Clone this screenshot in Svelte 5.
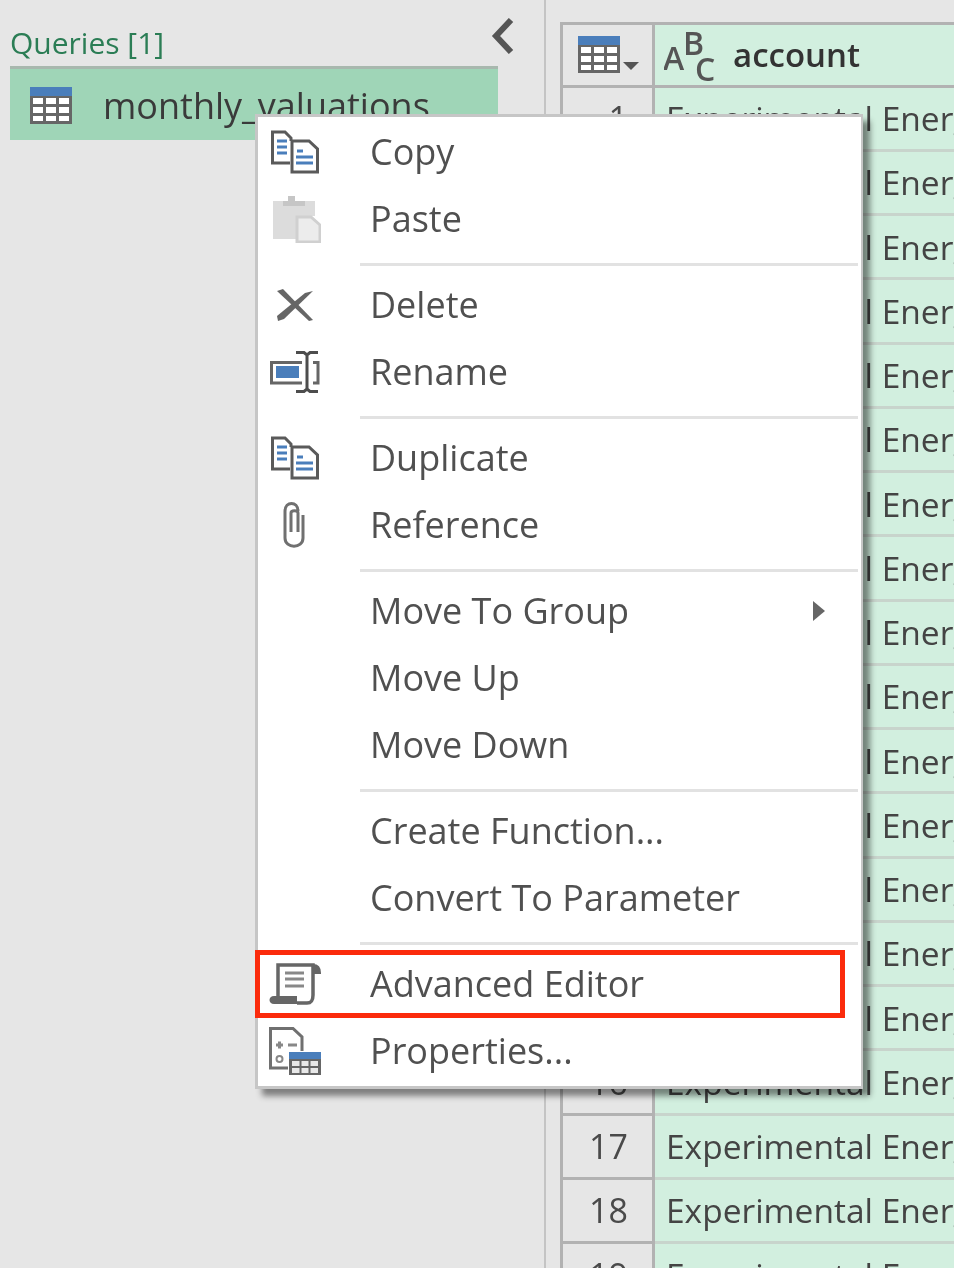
<script>
	const rows = Array.from({ length: 19 }, (_, i) => i + 1);

	// kind: null = no icon, sep = separator line
	const menu = [
		{ label: 'Copy', icon: 'copy' },
		{ label: 'Paste', icon: 'paste' },
		{ sep: true },
		{ label: 'Delete', icon: 'delete' },
		{ label: 'Rename', icon: 'rename' },
		{ sep: true },
		{ label: 'Duplicate', icon: 'copy' },
		{ label: 'Reference', icon: 'clip' },
		{ sep: true },
		{ label: 'Move To Group', arrow: true },
		{ label: 'Move Up' },
		{ label: 'Move Down' },
		{ sep: true },
		{ label: 'Create Function...' },
		{ label: 'Convert To Parameter' },
		{ sep: true },
		{ label: 'Advanced Editor', icon: 'editor' },
		{ label: 'Properties...', icon: 'props' }
	];
</script>

<div class="page">
	<aside class="queries">
		<div class="queries-head">
			<span class="queries-title">Queries [1]</span>
			<svg class="collapse" width="24" height="36" viewBox="0 0 24 36">
				<path d="M20 2 L5 18 L20 34" fill="none" stroke="#555" stroke-width="6" />
			</svg>
		</div>
		<div class="query-row">
			<svg width="42" height="37" viewBox="0 0 42 37">
				<rect x="0" y="0" width="42" height="37" fill="#666" />
				<rect x="0" y="0" width="42" height="9" fill="#4a7ebb" />
				<g fill="#fff">
					<rect x="3" y="11" width="10" height="6" /><rect x="16" y="11" width="10" height="6" /><rect x="29" y="11" width="10" height="6" />
					<rect x="3" y="20" width="10" height="6" /><rect x="16" y="20" width="10" height="6" /><rect x="29" y="20" width="10" height="6" />
					<rect x="3" y="29" width="10" height="5" /><rect x="16" y="29" width="10" height="5" /><rect x="29" y="29" width="10" height="5" />
				</g>
			</svg>
			<span>monthly_valuations</span>
		</div>
	</aside>

	<main class="grid-pane">
		<div class="table">
			<div class="row head">
				<div class="num">
					<svg width="62" height="38" viewBox="0 0 62 38">
						<rect x="0" y="0" width="42" height="37" fill="#666" />
						<rect x="0" y="0" width="42" height="9" fill="#4a7ebb" />
						<g fill="#fff">
							<rect x="3" y="11" width="10" height="6" /><rect x="16" y="11" width="10" height="6" /><rect x="29" y="11" width="10" height="6" />
							<rect x="3" y="20" width="10" height="6" /><rect x="16" y="20" width="10" height="6" /><rect x="29" y="20" width="10" height="6" />
							<rect x="3" y="29" width="10" height="5" /><rect x="16" y="29" width="10" height="5" /><rect x="29" y="29" width="10" height="5" />
						</g>
						<path d="M45 26 H61 L53 34 Z" fill="#555" />
					</svg>
				</div>
				<div class="cell head-cell">
					<svg class="abc" width="56" height="52" viewBox="0 0 56 52">
						<text x="-1" y="41" class="abc-letter">A</text>
						<text x="19" y="26" class="abc-letter">B</text>
						<text x="31" y="52" class="abc-letter">C</text>
					</svg>
					<span class="col-name">account</span>
				</div>
			</div>
			{#each rows as n}
				<div class="row">
					<div class="num">{n}</div>
					<div class="cell">Experimental Energy</div>
				</div>
			{/each}
		</div>
	</main>

	<div class="menu">
		{#each menu as item}
			{#if item.sep}
				<div class="sep"></div>
			{:else}
				<div class="item">
					<div class="icon">
						{#if item.icon === 'copy'}
							<svg width="48" height="44" viewBox="0 0 48 44" fill="none">
								<path d="M19 33 H1.5 V2 H14 L20 8 V11" fill="#fff" stroke="#5a5a5a" stroke-width="3" />
								<path d="M21 11 H38 L46.5 19 V42 H21 Z" fill="#fff" stroke="#5a5a5a" stroke-width="3" />
								<path d="M6 11 H16 M6 17 H16 M6 23 H16 M26 21 H32 M25 27 H42 M25 33 H42" stroke="#4a7ebb" stroke-width="3" />
							</svg>
						{:else if item.icon === 'paste'}
							<svg width="52" height="48" viewBox="-4 0 52 48">
								<path d="M0 6 H42 V21 H23 V44 H0 Z" fill="#dcdcdc" />
								<path d="M10 11 V6 H15 V1 H22 V6 H32 V11 Z" fill="#c6c6c6" />
								<path d="M24 22 H38 L47 30 V47 H24 Z" fill="#ececec" stroke="#d0d0d0" stroke-width="3" />
							</svg>
						{:else if item.icon === 'delete'}
							<svg width="38" height="32" viewBox="0 0 38 32">
								<path d="M1 2 L7 0 L37 31 L33 32 Z" fill="#666" />
								<path d="M37 2 L29 4 L1 27 L2 32 L8 30 Z" fill="#666" />
							</svg>
						{:else if item.icon === 'rename'}
							<svg width="50" height="42" viewBox="0 0 50 42" fill="none">
								<path d="M32 11.5 H1.5 V32 H32" stroke="#666" stroke-width="3" />
								<rect x="6" y="15" width="23" height="12" fill="#4a7ebb" />
								<path d="M43 11.5 H48 V32 H43" stroke="#666" stroke-width="3" />
								<path d="M26 1.5 H34 L37 4 L40 1.5 H48 M26 40.5 H34 L37 38 L40 40.5 H48 M37 4 V38" stroke="#4d4d4d" stroke-width="3" />
							</svg>
						{:else if item.icon === 'clip'}
							<svg width="24" height="46" viewBox="0 0 24 46" fill="none">
								<path d="M8 30 V11 C8 8 15 8 15 11 V30 M20 13 V36 C20 47 2 47 2 36 V9 C2 -1 15 -1 15 9" stroke="#707070" stroke-width="3" />
							</svg>
						{:else if item.icon === 'editor'}
							<svg width="52" height="42" viewBox="0 0 52 42" fill="none">
								<path d="M9 34 V2 H44 V32 C44 38 42 40 38 40 H28" stroke="#666" stroke-width="3.5" />
								<path d="M44 2 C49 2 51 5 51 10 H44" fill="#666" stroke="#666" stroke-width="2" />
								<path d="M5 33 H28 V41 H5 C-1 41 -1 33 5 33 Z" fill="#666" />
								<path d="M16 10 H35 M16 16 H35 M16 23 H35" stroke="#888" stroke-width="3" />
							</svg>
						{:else if item.icon === 'props'}
							<svg width="52" height="48" viewBox="0 0 52 48" fill="none">
								<path d="M19 41 H1.5 V1.5 H24 L33 10 V24" stroke="#707070" stroke-width="3" />
								<path d="M7 18 H14 M10.5 14.5 V21.5 M19 18 H28" stroke="#888" stroke-width="3" />
								<circle cx="10.5" cy="32" r="3" stroke="#888" stroke-width="2" />
								<rect x="20" y="25" width="32" height="23" fill="#666" />
								<rect x="20" y="25" width="32" height="7" fill="#4a7ebb" />
								<path d="M23 34 H49 V46 H23 Z" fill="#e8e8e8" />
								<path d="M31.5 33 V47 M40.5 33 V47 M22 40 H50" stroke="#666" stroke-width="2" />
							</svg>
						{/if}
					</div>
					<span class="label">{item.label}</span>
					{#if item.arrow}
						<svg class="sub" width="14" height="20" viewBox="0 0 14 20">
							<path d="M1 0 L13 10 L1 20 Z" fill="#666" />
						</svg>
					{/if}
				</div>
			{/if}
		{/each}
		<div class="highlight"></div>
	</div>
</div>

<style>
	:global(body) {
		background: #e6e6e6;
	}

	.page {
		position: relative;
		display: flex;
		width: 954px;
		height: 1268px;
		overflow: hidden;
		background: #e6e6e6;
		color: #444;
		font-family: "Open Sans", "Noto Sans", sans-serif;
		font-size: 33.5px;
		filter: blur(0.7px);
	}

	/* left pane */
	.queries {
		box-sizing: border-box;
		width: 546px;
		flex: none;
		padding: 18px 0 0 10px;
		border-right: 2px solid #c4c4c4;
	}
	.queries-head {
		display: flex;
		justify-content: space-between;
		align-items: flex-start;
		width: 508px;
		height: 48px;
	}
	.queries-title {
		padding-top: 4px;
		color: #2b7d55;
		font-size: 30px;
		line-height: 42px;
	}
	.collapse {
		margin-right: 3px;
	}
	.query-row {
		box-sizing: border-box;
		display: flex;
		align-items: center;
		gap: 31px;
		width: 488px;
		height: 74px;
		padding-left: 20px;
		padding-top: 2px;
		background: #9fd5b7;
		border-top: 3px solid #a8b8ae;
		color: #3a3a3a;
		font-size: 36px;
	}

	/* data grid */
	.grid-pane {
		flex: 1;
		min-width: 0;
		padding: 22px 0 0 14px;
	}
	.table {
		border-top: 3px solid #b2b2b2;
		border-left: 3px solid #b2b2b2;
	}
	.row {
		display: flex;
		box-sizing: border-box;
		height: 64.25px;
		white-space: nowrap;
	}
	.row.head {
		height: 62.5px;
	}
	.num {
		box-sizing: border-box;
		display: flex;
		align-items: center;
		justify-content: flex-end;
		flex: none;
		width: 92px;
		padding-right: 24px;
		border-right: 3px solid #b2b2b2;
		border-bottom: 3px solid #b2b2b2;
		background: #e6e6e6;
		color: #4a4a4a;
		font-size: 34px;
	}
	.head .num {
		justify-content: flex-start;
		padding: 0 0 0 15px;
	}
	.cell {
		box-sizing: border-box;
		display: flex;
		align-items: center;
		flex: 1;
		min-width: 0;
		padding-left: 11px;
		background: #d2efdf;
		border-bottom: 3px solid #c8d4cc;
		color: #444;
		overflow: hidden;
	}
	.head-cell {
		padding-left: 9px;
		gap: 13px;
		border-bottom-color: #b2b2b2;
	}
	.col-name {
		color: #333;
		font-size: 33px;
		font-weight: 600;
	}
	.abc-letter {
		fill: #555;
		font-family: "Open Sans", sans-serif;
		font-size: 32px;
		font-weight: 600;
	}

	/* context menu */
	.menu {
		position: absolute;
		left: 255px;
		top: 114px;
		box-sizing: border-box;
		width: 608px;
		height: 975px;
		padding-top: 1px;
		background: #fff;
		border: 3px solid #c6c6c6;
		border-width: 3px 2px 3px 3px;
		box-shadow: 7px 7px 6px rgba(0, 0, 0, 0.45);
	}
	.item {
		position: relative;
		display: flex;
		align-items: center;
		height: 67px;
		color: #505050;
		font-size: 36px;
	}
	.icon {
		display: flex;
		align-items: center;
		justify-content: center;
		flex: none;
		width: 74px;
		margin-right: 38px;
	}
	.sep {
		height: 3px;
		margin: 11px 3px 5px 102px;
		background: #e2e2e2;
	}
	.sub {
		position: absolute;
		left: 554px;
		top: 24px;
	}
	.highlight {
		position: absolute;
		left: -3px;
		top: 833px;
		box-sizing: border-box;
		width: 590px;
		height: 68px;
		border: 5px solid #fb2b0c;
	}
</style>
